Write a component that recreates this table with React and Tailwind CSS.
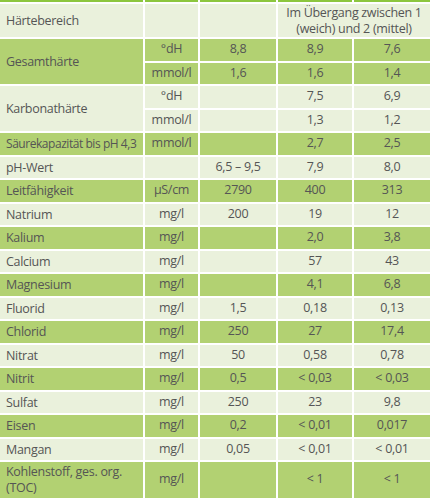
import React from "react";

const LIGHT = "bg-[#eaf1dc]";
const DARK = "bg-[#b2d172]";

// Zeilen mit einer Einheit (Name, Einheit, Grenzwert, Wert 1, Wert 2)
const rows = [
  ["Säurekapazität bis pH 4,3", "mmol/l", "", "2,7", "2,5"],
  ["pH-Wert", "", "6,5 – 9,5", "7,9", "8,0"],
  ["Leitfähigkeit", "µS/cm", "2790", "400", "313"],
  ["Natrium", "mg/l", "200", "19", "12"],
  ["Kalium", "mg/l", "", "2,0", "3,8"],
  ["Calcium", "mg/l", "", "57", "43"],
  ["Magnesium", "mg/l", "", "4,1", "6,8"],
  ["Fluorid", "mg/l", "1,5", "0,18", "0,13"],
  ["Chlorid", "mg/l", "250", "27", "17,4"],
  ["Nitrat", "mg/l", "50", "0,58", "0,78"],
  ["Nitrit", "mg/l", "0,5", "< 0,03", "< 0,03"],
  ["Sulfat", "mg/l", "250", "23", "9,8"],
  ["Eisen", "mg/l", "0,2", "< 0,01", "0,017"],
  ["Mangan", "mg/l", "0,05", "< 0,01", "< 0,01"],
];

function Cell({ children, bg, className = "" }) {
  return (
    <div className={`${bg} flex items-center justify-center text-center ${className}`}>
      {children}
    </div>
  );
}

function Label({ children, bg, className = "" }) {
  return (
    <div className={`${bg} flex items-center pl-[6px] leading-[15px] whitespace-nowrap ${className}`}>
      {children}
    </div>
  );
}

export default function App() {
  return (
    <div className="w-[430px] h-[500px] overflow-hidden bg-white">
      <div
        className="grid grid-cols-[143px_53px_76px_74px_76px] grid-rows-[2px_33px_repeat(18,21.5px)_35.5px_21.5px] gap-[2px] text-[12.5px] tracking-[-0.3px] text-[#555555]"
        style={{ fontFamily: '"Open Sans", sans-serif' }}
      >
        {/* Rest der vorherigen Zeile */}
        <div className="bg-[#8cc63e]" />
        <div className="bg-[#8cc63e]" />
        <div className="bg-[#8cc63e]" />
        <div className="bg-[#8cc63e]" />
        <div className="bg-[#8cc63e]" />

        <Label bg={LIGHT}>Härtebereich</Label>
        <Cell bg={LIGHT} />
        <Cell bg={LIGHT} />
        <Cell bg={LIGHT} className="col-span-2 leading-[16px]">
          Im Übergang zwischen 1<br />(weich) und 2 (mittel)
        </Cell>

        <Label bg={DARK} className="row-span-2">Gesamthärte</Label>
        <Cell bg={DARK}>°dH</Cell>
        <Cell bg={DARK}>8,8</Cell>
        <Cell bg={DARK}>8,9</Cell>
        <Cell bg={DARK}>7,6</Cell>
        <Cell bg={DARK}>mmol/l</Cell>
        <Cell bg={DARK}>1,6</Cell>
        <Cell bg={DARK}>1,6</Cell>
        <Cell bg={DARK}>1,4</Cell>

        <Label bg={LIGHT} className="row-span-2">Karbonathärte</Label>
        <Cell bg={LIGHT}>°dH</Cell>
        <Cell bg={LIGHT} />
        <Cell bg={LIGHT}>7,5</Cell>
        <Cell bg={LIGHT}>6,9</Cell>
        <Cell bg={LIGHT}>mmol/l</Cell>
        <Cell bg={LIGHT} />
        <Cell bg={LIGHT}>1,3</Cell>
        <Cell bg={LIGHT}>1,2</Cell>

        {rows.map((r, i) => {
          const bg = i % 2 === 0 ? DARK : LIGHT;
          return (
            <React.Fragment key={r[0]}>
              <Label bg={bg} className={i === 0 ? "text-[12px] tracking-[-0.45px]" : ""}>
                {r[0]}
              </Label>
              <Cell bg={bg}>{r[1]}</Cell>
              <Cell bg={bg}>{r[2]}</Cell>
              <Cell bg={bg}>{r[3]}</Cell>
              <Cell bg={bg}>{r[4]}</Cell>
            </React.Fragment>
          );
        })}

        <Label bg={DARK}>
          <span className="leading-[16px]">
            Kohlenstoff, ges. org.
            <br />
            (TOC)
          </span>
        </Label>
        <Cell bg={DARK}>mg/l</Cell>
        <Cell bg={DARK} />
        <Cell bg={DARK}>&lt; 1</Cell>
        <Cell bg={DARK}>&lt; 1</Cell>
      </div>
    </div>
  );
}
